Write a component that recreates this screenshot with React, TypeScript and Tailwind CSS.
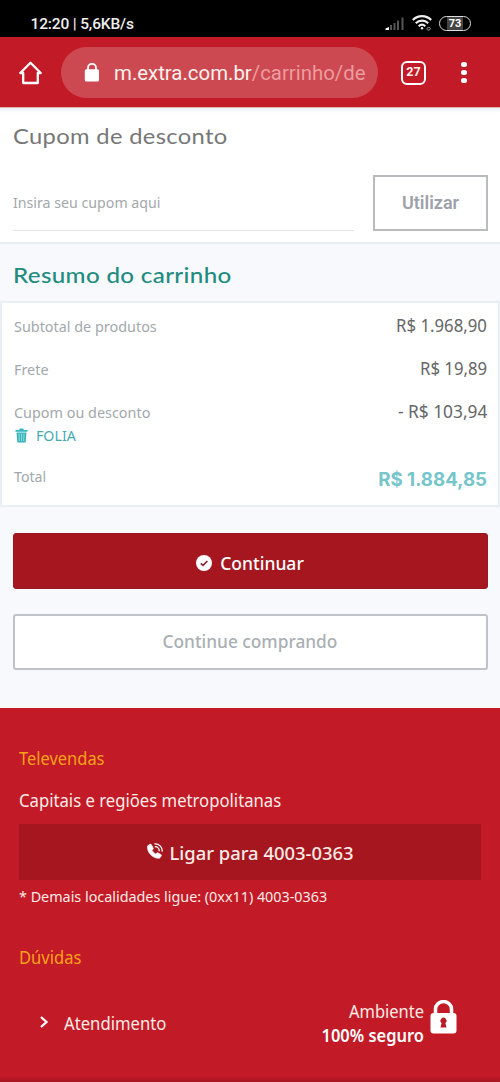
import React from "react";

function StatusBar() {
  return (
    <div className="flex h-[37px] items-start justify-between bg-black pr-[29px] pl-[30.5px]">
      <span className="mt-[12px] font-[Roboto] text-[15.5px] leading-[24px] font-medium tracking-[-0.15px] whitespace-nowrap text-[#eeeeee]">12:20 | 5,6KB/s</span>
      <div className="mt-[15px] flex items-center">
        <svg className="mr-[7px] h-[15px] w-[20px]" viewBox="0 0 20 15">
          <path d="M0.5 14V12.5L4 11V14Z" fill="#fff" />
          <g fill="#555">
            <rect x="5" y="9" width="2" height="5" />
            <rect x="8.5" y="7" width="2" height="7" />
            <rect x="12" y="4.5" width="2" height="9.5" />
            <rect x="16.5" y="1.5" width="2" height="12.5" />
          </g>
        </svg>
        <svg className="mr-[7px] h-[16px] w-[20px]" viewBox="0 0 20 16" fill="none" stroke="#eee" strokeWidth="2.1">
          <path d="M0.8 5C6 -0.2 14 -0.2 19.2 5" />
          <path d="M3.8 8.2C7.2 4.8 12.8 4.8 16.2 8.2" />
          <path d="M6.7 11.2C8.7 9.3 11.3 9.3 13.3 11.2" />
          <circle cx="10" cy="13.3" r="1.2" fill="#eee" stroke="none" />
          <path d="M14.8 14.4c0-2.2 3-2.8 3.7-.8M15.4 14.8c1 .5 2.5.3 3.2-1.2" stroke="#aaa" strokeWidth="1" />
        </svg>
        <div className="flex h-[15px] w-[32px] items-center justify-center rounded-full border-[1.5px] border-[#ddd] bg-[linear-gradient(90deg,#000_25%,#444_25%,#444_78%,#000_78%)] font-[Roboto] text-[11px] leading-none font-bold text-white">73</div>
      </div>
    </div>
  );
}

function BrowserBar() {
  return (
    <div className="flex h-[71px] items-center border-b border-[#dfb5b4] bg-[#c21a26] pt-[1px] pl-[19px]">
      <svg className="h-[24px] w-[24px]" viewBox="0 0 24 24" fill="none" stroke="#fff" strokeWidth="2.3" strokeLinejoin="round" strokeLinecap="round">
        <path d="M1.3 12L11.5 1.8L21.7 12H18.8V22H4.2V12Z" />
      </svg>
      <div className="ml-[18px] flex h-[51px] w-[317px] items-center rounded-full bg-[#cd4951] pl-[23px]">
        <svg className="h-[19px] w-[16px]" viewBox="0 0 16 19">
          <path d="M4 8V4.8a4 4 0 0 1 8 0V8" fill="none" stroke="#fff" strokeWidth="1.8" />
          <rect x="0.8" y="6.3" width="14.2" height="12.2" rx="1.5" fill="#fff" />
        </svg>
        <span className="mt-[2px] ml-[14px] font-[Roboto] text-[20.4px] whitespace-nowrap text-[#fff1ed]">m.extra.com.br<span className="text-[#ee9c9f]">/carrinho/de</span></span>
      </div>
      <div className="ml-[23px] flex h-[24px] w-[25px] items-center justify-center rounded-[6px] border-[2.5px] border-white font-[Roboto] text-[12.5px] leading-none font-bold text-[#fff1ed]">27</div>
      <div className="ml-[35px] flex flex-col gap-[2.3px]">
        <i className="size-[5.5px] rounded-full bg-white" />
        <i className="size-[5.5px] rounded-full bg-white" />
        <i className="size-[5.5px] rounded-full bg-white" />
      </div>
    </div>
  );
}

function Coupon() {
  return (
    <section className="h-[136px] border-b-2 border-[#e9edf1] bg-white bg-[linear-gradient(#eef0f8,#fff_5px)] px-[13px] pt-[12px]">
      <h2 className="origin-left scale-x-[1.13] font-[Lato] text-[21px] leading-[32px] tracking-[0.3px] whitespace-nowrap text-[#777]">Cupom de desconto</h2>
      <div className="mt-[23px] flex justify-between">
        <div className="flex h-[56px] w-[341px] items-center border-b border-[#e2e4e6]">
          <span className="text-[14.2px] whitespace-nowrap text-[#a3a8ab]">Insira seu cupom aqui</span>
        </div>
        <button className="mr-[-1px] h-[56px] w-[115px] border-2 border-[#b9bbbe] bg-white pb-[2px] font-[Roboto] text-[18px] font-semibold text-[#9da2aa]">Utilizar</button>
      </div>
    </section>
  );
}

function Row({ label, value, wide = false }: { label: string; value: string; wide?: boolean }) {
  return (
    <div className="flex h-[43px] items-start justify-between">
      <span className="mt-[1px] text-[14.4px] leading-[24px] whitespace-nowrap text-[#a2a8ac]">{label}</span>
      <span className={`origin-right text-[17.5px] leading-[22px] whitespace-nowrap text-[#666] ${wide ? "scale-x-[0.99]" : "scale-x-[0.957]"}`}>{value}</span>
    </div>
  );
}

function Summary() {
  return (
    <section>
      <div className="h-[57px] px-[13px] pt-[15px]">
        <h2 className="origin-left scale-x-[1.15] font-[Lato] text-[21px] leading-[32px] font-medium tracking-[0.3px] whitespace-nowrap text-[#218b80]">Resumo do carrinho</h2>
      </div>
      <div className="h-[206px] border-2 border-[#e9eef2] bg-white pt-[11px] pr-[11px] pl-[12px]">
        <Row label="Subtotal de produtos" value="R$ 1.968,90" />
        <Row label="Frete" value="R$ 19,89" />
        <div className="h-[64px]">
          <Row label="Cupom ou desconto" value="- R$ 103,94" wide />
          <div className="mt-[-19px] flex h-[24px] items-center text-[14.2px] text-[#43acb0]">
            <svg className="mt-[-2px] mr-[8px] ml-px h-[15px] w-[13px]" viewBox="0 0 13 15">
              <path d="M0.5 2H4L5 .5H8L9 2H12.5V3.8H.5Z" fill="#36b5bc" />
              <path d="M1.5 4.5H11.5L10.6 14.5H2.4Z" fill="#36b5bc" />
              <path d="M4 5.5l.4 7.5M6.500 5.500V13M9 5.500L8.600 13" stroke="#d8f4f5" strokeWidth="0.6" />
            </svg>
            FOLIA
          </div>
        </div>
        <div className="flex items-start justify-between">
          <span className="mt-[1px] text-[14.2px] leading-[24px] text-[#a2a8ac]">Total</span>
          <span className="mt-[3px] font-[Inter] text-[18.7px] leading-[26px] font-bold whitespace-nowrap text-[#75c5cb]">R$ 1.884,85</span>
        </div>
      </div>
    </section>
  );
}

function Actions() {
  return (
    <section className="flex h-[201px] flex-col gap-[25px] px-[12.5px] pt-[26px]">
      <button className="flex h-[56px] w-full shrink-0 items-center justify-center rounded-[3px] border border-[#9a1722] bg-[#a5161f] pt-[3px] text-white">
        <svg className="mr-[8px] h-[16px] w-[16px]" viewBox="0 0 16 16">
          <circle cx="8" cy="8" r="8" fill="#fff" />
          <path d="M4.8 8.4L7 10.4L11.4 6" fill="none" stroke="#83222b" strokeWidth="1.6" />
        </svg>
        <span className="text-[17.5px] leading-[26px] font-medium whitespace-nowrap">Continuar</span>
      </button>
      <button className="h-[56px] w-full shrink-0 rounded-[3px] border-2 border-[#bfc2c6] bg-white pb-[1px] text-[17.3px] font-medium text-[#a9afb3]">Continue comprando</button>
    </section>
  );
}

function Footer() {
  return (
    <footer className="h-[374px] bg-[#c21a26] bg-[linear-gradient(#c21a26_368px,#a61721)] px-[19px] pt-[37px] text-[#ffebe6]">
      <h3 className="origin-left scale-x-[0.94] text-[17.5px] leading-[26px] text-[#f9a11b]">Televendas</h3>
      <p className="mt-[16px] origin-left scale-x-[0.953] text-[17.5px] leading-[26px] whitespace-nowrap">Capitais e regiões metropolitanas</p>
      <button className="mt-[11px] flex h-[56px] w-full items-center justify-center bg-[#a5161f] pt-[1px] text-[18.4px] font-medium">
        <svg className="mt-[-3px] mr-[7px] h-[16px] w-[16px]" viewBox="0 0 16 16" fill="none" stroke="#fff">
          <path d="M2.700 1.300L.5 3C-.5 9.200 6 16 12.500 15.300L14.300 13c.3-.6.2-1.200-.4-1.500L11.200 9.900c-.6-.3-1.200-.2-1.600.3l-.8.9C7.200 10.200 5.900 8.800 5 7.200l.8-.8c.5-.5.6-1 .3-1.600L4.400 1.700c-.4-.6-1-.8-1.700-.4Z" fill="#fff" strokeWidth="0.6" />
          <path d="M7.400.9C11.800.3 15.700 4.200 15.100 8.600M7.800 3.700C10.400 3.500 12.500 5.600 12.200 8.200" strokeWidth="1.300" />
        </svg>
        <span className="whitespace-nowrap">Ligar para 4003-0363</span>
      </button>
      <p className="mt-[6px] text-[14.35px] leading-[22px] whitespace-nowrap">* Demais localidades ligue: (0xx11) 4003-0363</p>
      <h3 className="mt-[36px] origin-left scale-x-[0.945] text-[17.5px] leading-[26px] text-[#f9a11b]">Dúvidas</h3>
      <div className="mt-[29px] flex justify-between pr-[24px] pl-[20px]">
        <div className="mt-[11px] flex h-[26px] items-center">
          <svg className="mt-[-3px] mr-[15px] h-[12px] w-[10px]" viewBox="0 0 10 12" fill="none" stroke="#fff" strokeWidth="2.3">
            <path d="M2 1L7.500 6L2 11" />
          </svg>
          <span className="origin-left scale-x-[0.953] text-[17.5px]">Atendimento</span>
        </div>
        <div className="flex">
          <div className="origin-right scale-x-[0.94] text-right text-[17.5px] leading-[24px] whitespace-nowrap">
            <p>Ambiente</p>
            <p className="font-semibold text-white">100% seguro</p>
          </div>
          <svg className="mt-[1px] ml-[6px] h-[34px] w-[27px]" viewBox="0 0 27 34">
            <path d="M5.500 16V9a8 7.500 0 0 1 16 0v7" fill="none" stroke="#fff" strokeWidth="3.500" />
            <rect x="0.500" y="13" width="26" height="20.500" rx="3" fill="#fff" />
            <path d="M11.600 23a3 3 0 1 1 3.800 0L16.500 27.500H10.500Z" fill="#b91b27" />
          </svg>
        </div>
      </div>
    </footer>
  );
}

export default function App() {
  return (
    <main className="h-[1082px] w-[500px] overflow-hidden bg-[#f7f9fc] font-['Noto_Sans',sans-serif]">
      <StatusBar />
      <BrowserBar />
      <Coupon />
      <Summary />
      <Actions />
      <Footer />
    </main>
  );
}
